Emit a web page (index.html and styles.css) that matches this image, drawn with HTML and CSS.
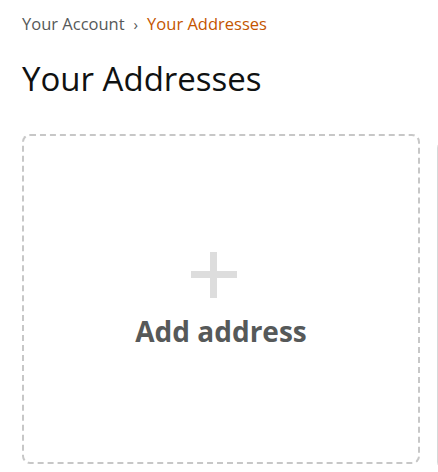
FILE: index.html
```html
<!DOCTYPE html>
<html lang="en">
<head>
<meta charset="utf-8">
<title>Your Addresses</title>
<link rel="stylesheet" href="styles.css">
</head>
<body>
<div class="page">
  <nav class="crumbs">
    <a class="crumb" href="#">Your Account</a>
    <span class="sep">›</span>
    <a class="crumb current" href="#">Your Addresses</a>
  </nav>
  <h1 class="title">Your Addresses</h1>
  <div class="cards">
    <a class="card add-card" href="#">
      <span class="plus"><span class="bar h"></span><span class="bar v"></span></span>
      <span class="add-label">Add address</span>
    </a>
    <div class="card addr-card"></div>
  </div>
</div>
</body>
</html>
```
FILE: styles.css
```css
html, body {
  margin: 0;
  padding: 0;
  overflow: hidden;
  background: #fff;
}
body {
  font-family: "Open Sans", "Noto Sans", Arial, sans-serif;
  color: #0f1111;
}
.page {
  padding: 12px 0 0 22px;
}
.crumbs {
  display: flex;
  align-items: center;
  gap: 9px;
  font-size: 16.5px;
  line-height: 24px;
  height: 24px;
}
.crumb {
  color: #565959;
  text-decoration: none;
}
.crumb.current {
  color: #c45500;
}
.sep {
  color: #565959;
  font-size: 15px;
}
.title {
  margin: 21px 0 0;
  font-weight: 400;
  font-size: 33px;
  line-height: 44px;
}
.cards {
  display: grid;
  grid-template-columns: 398px 398px;
  gap: 17px;
  margin-top: 33px;
  width: 416px;
  overflow: hidden;
}
.card {
  box-sizing: border-box;
  height: 330px;
  border-radius: 8px;
}
.add-card {
  border: 2px dashed #c7c7c7;
  display: flex;
  flex-direction: column;
  align-items: center;
  justify-content: center;
  text-decoration: none;
  padding-top: 4px;
}
.addr-card {
  border: 1px solid #d5d9d9;
  margin-top: 6px;
}
.plus {
  position: relative;
  width: 46px;
  height: 46px;
  display: block;
  margin-right: 14px;
}
.bar {
  position: absolute;
  background: #dddddd;
}
.bar.h {
  left: 0;
  right: 0;
  top: 19px;
  height: 7px;
}
.bar.v {
  top: 0;
  bottom: 0;
  left: 19px;
  width: 7px;
}
.add-label {
  margin-top: 14px;
  font-size: 28px;
  font-weight: 700;
  color: #565959;
  line-height: 38px;
}
```
